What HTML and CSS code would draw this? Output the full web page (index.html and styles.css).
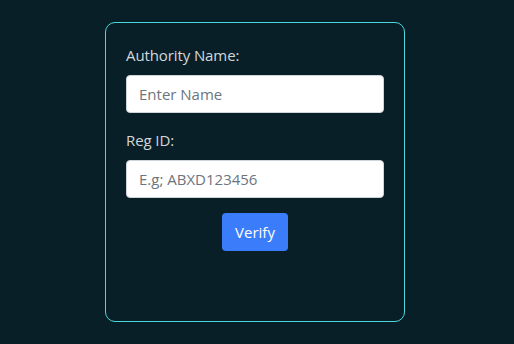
FILE: index.html
```html
<!DOCTYPE html>
<html lang="en">
<head>
  <meta charset="UTF-8">
  <meta name="viewport" content="width=device-width, initial-scale=1">
  <title>Verify Authority</title>
  <link rel="stylesheet" href="styles.css">
</head>
<body>
  <div class="card">
    <form class="verify-form">
      <div class="form-group">
        <label for="authName">Authority Name:</label>
        <input type="text" id="authName" placeholder="Enter Name">
      </div>
      <div class="form-group">
        <label for="regId">Reg ID:</label>
        <input type="text" id="regId" placeholder="E.g; ABXD123456">
      </div>
      <div class="actions">
        <button type="button">Verify</button>
      </div>
    </form>
  </div>
</body>
</html>
```

FILE: styles.css
```css
/* Reset & Global Styles */
* { margin: 0; padding: 0; box-sizing: border-box; }
body {
  font-family: 'Open Sans', 'Noto Sans', sans-serif;
  background: #081f28;
  color: #d3d7da;
  height: 100vh;
  display: flex;
  justify-content: center;
  align-items: flex-start;
  padding-top: 22px;
  padding-right: 4px;
}
.card { width: 300px; height: 300px; border: 1px solid #4ed6de; border-radius: 10px; padding: 20px; }
.form-group { display: flex; flex-direction: column; margin-bottom: 15px; }
label { font-size: 15px; line-height: 24px; margin-bottom: 8px; letter-spacing: -0.1px; }
input { width: 100%; height: 38px; padding: 6px 12px; font-family: inherit; font-size: 15px; color: #212529; background: #fff; border: 1px solid #ced4da; border-radius: 4px; }
input::placeholder { color: #6c757d; }
.actions { display: flex; justify-content: center; }
button { height: 38px; padding: 0 13px; font-family: inherit; font-size: 15px; color: #fff; background: #3b7cfb; border: none; border-radius: 4px; cursor: pointer; }
```
